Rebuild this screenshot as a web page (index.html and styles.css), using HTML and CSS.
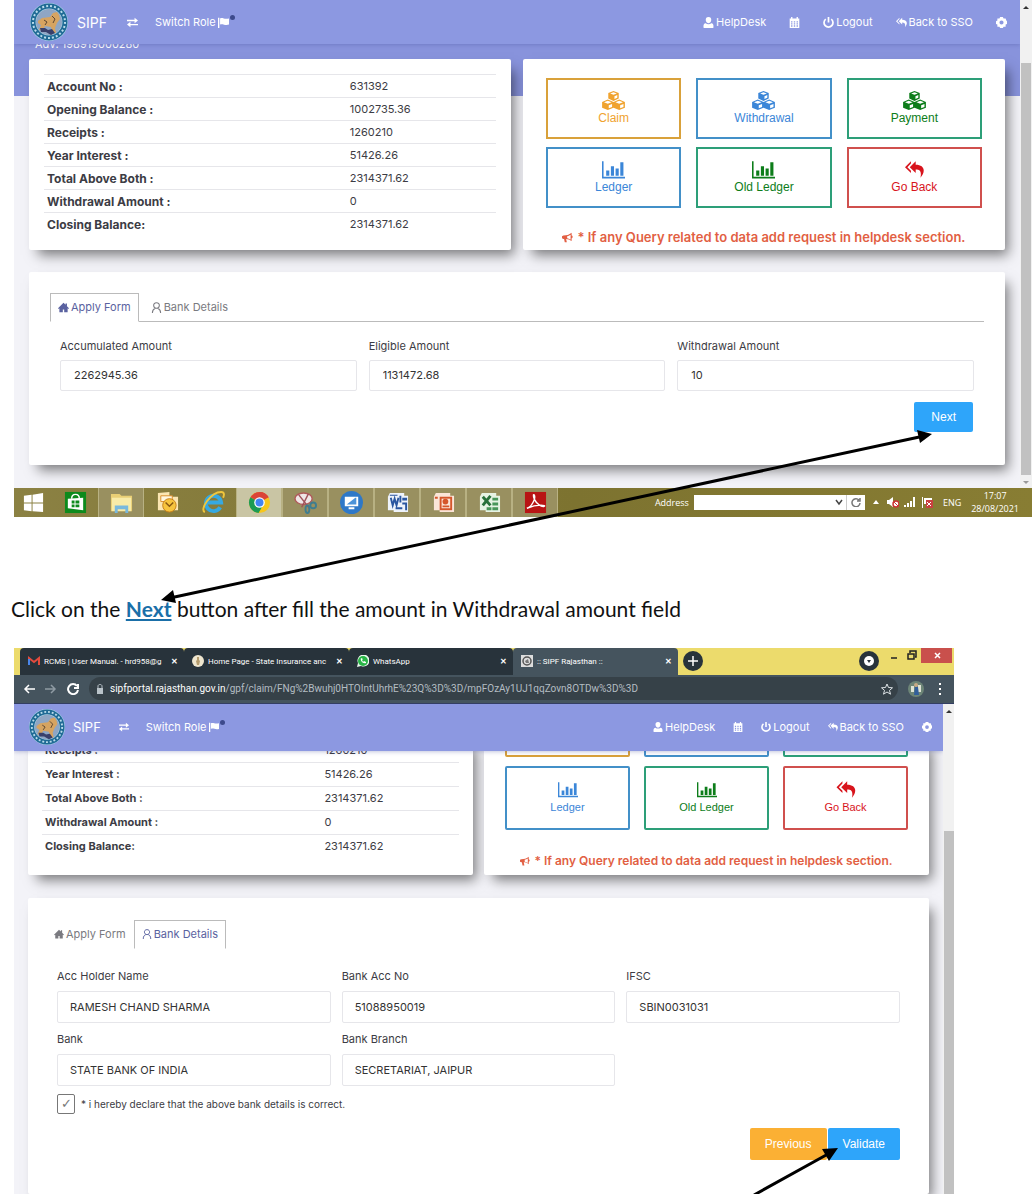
FILE: index.html
```html
<!DOCTYPE html>
<html lang="en">
<head>
  <meta charset="UTF-8" />
  <meta name="viewport" content="width=device-width, initial-scale=1" />
  <title>SIPF Rajasthan - User Manual</title>
  <link rel="stylesheet" href="styles.css">
</head>
<body>

  <!-- Icons -->
  <svg class="sprite" aria-hidden="true">
    <symbol id="logo" viewBox="0 0 38 38">
      <circle cx="19" cy="19" r="19" fill="#a9d3e6"/>
      <circle cx="19" cy="19" r="16" fill="none" stroke="#1f6a95" stroke-width="5"/>
      <circle cx="19" cy="19" r="16" fill="none" stroke="#b9dcea" stroke-width="2" stroke-dasharray="2 2"/>
      <circle cx="19" cy="19" r="13" fill="#8fa6c4"/>
      <path d="M8 18l4-3 8-1 3-4 4-1 2 3 1 4-3 4-2 5 1 5h-3l-2-6-6-1-2 4H9l2-5-3-2z" fill="#d6a461"/>
      <path d="M10 25h5l3 2 4-1 3 4-4 2-5-3-5 0z" fill="#39406b"/>
      <path d="M14 17l3 2-2 3M22 13l3 3-2 4" fill="none" stroke="#5b4632"/>
    </symbol>
    <symbol id="exchange" viewBox="0 0 16 16">
      <path d="M0 4h11V1l5 4-5 4V6H0zM16 10H5V7l-5 4 5 4v-3h11z"/>
    </symbol>
    <symbol id="flag" viewBox="0 0 16 16">
      <path d="M0 1h2v15H0zM3 2c4-2 6 2 13 0v9c-6 2-9-2-13 0z"/>
    </symbol>
    <symbol id="user" viewBox="0 0 16 16">
      <path d="M8 0c3 0 4 2 4 4s-1 5-4 5-4-3-4-5 1-4 4-4zM1 16c-1-5 1-7 3-7 2 2 6 2 8 0 2 0 4 2 3 7z"/>
    </symbol>
    <symbol id="user-o" viewBox="0 0 16 16">
      <path d="M8 1c6 0 5 8 0 8s-6-8 0-8zM2 16c0-5 2-6 4-7M14 16c0-5-2-6-4-7" fill="none" stroke="currentColor" stroke-width="1.5"/>
    </symbol>
    <symbol id="calendar" viewBox="0 0 16 16">
      <path fill-rule="evenodd" d="M1 2h2V0h2v2h6V0h2v2h2v14H1zM3 6v2h2V6zM7 6v2h2V6zM11 6v2h2V6zM3 9v2h2V9zM7 9v2h2V9zM11 9v2h2V9zM3 12v2h2v-2zM7 12v2h2v-2zM11 12v2h2v-2z"/>
    </symbol>
    <symbol id="power" viewBox="0 0 16 16">
      <path d="M4 3a6.500 6.500 0 1 0 8 0M8 0v8" fill="none" stroke="currentColor" stroke-width="2.500"/>
    </symbol>
    <symbol id="reply-all" viewBox="0 0 16 16">
      <path d="M5 1L0 6l5 5V9L2 6l3-3zM9 1L4 6l5 5V8c4 0 5 2 4 7 5-6 3-11-4-11z"/>
    </symbol>
    <symbol id="gear" viewBox="0 0 16 16">
      <path fill-rule="evenodd" d="M6 0h4l1 2 3 0 1 3 1 1v4l-2 1 0 3-3 0-1 2H6l-1-2-3 0 0-3-2-1V6l2-1 0-3 3 0zM8 5a3 3 0 1 0 0 6 3 3 0 0 0 0-6z"/>
    </symbol>
    <symbol id="cubes" viewBox="0 0 24 20">
      <path d="M12 0l5.500 2v6L12 10.500 6.500 8V2zM6 9l6 2.500v6L6 20 0 17.500v-6zM18 9l6 2.500v6L18 20l-6-2.500v-6z"/>
      <path d="M8.500 2.600L12 4l3.500-1.400L12 1.300zM13 5.500v3l3-1.400v-3zM2 11.800l4 1.700 4-1.700-4-1.600zM7 15v3.200l3.500-1.400v-3.200zM14 11.800l4 1.700 4-1.700-4-1.600zM19 15v3.200l3.500-1.400v-3.200z" fill="#fff"/>
    </symbol>
    <symbol id="chart" viewBox="0 0 22 18">
      <path d="M0 1h1.500v15H22v1.500H0zM4 10h3v5H4zM8.500 6h3v9h-3zM13 8h3v7h-3zM17.500 2h3v13h-3z"/>
    </symbol>
    <symbol id="bullhorn" viewBox="0 0 16 16">
      <path d="M14 1C10 4 7 5 2 5L0 6v3l2 1h1l1 5h3l-1-5c3 0 5 1 8 3V9c2 0 2-4 0-4zM12.500 4v7c-2-1-3-1.500-5-2V6c2-.3 3-.8 5-2z" fill-rule="evenodd"/>
    </symbol>
    <symbol id="home" viewBox="0 0 16 16">
      <path d="M8 1l3 3V2h2v4l3 3-1 1-1-1v6H9v-4H7v4H2V9l-1 1-1-1z"/>
    </symbol>
  </svg>

  <!-- Step 1: apply form -->
  <section class="screen">
    <div class="viewport">
      <div class="page">
        <nav class="navbar">
          <svg class="logo"><use href="#logo"/></svg>
          <a href="#" class="brand">SIPF</a>
          <a href="#" class="switch"><svg class="icon"><use href="#exchange"/></svg><span>Switch Role</span><svg class="icon"><use href="#flag"/></svg><i class="dot"></i></a>
          <div class="nav-right">
            <a href="#"><svg class="icon"><use href="#user"/></svg>HelpDesk</a>
            <a href="#" aria-label="Calendar"><svg class="icon"><use href="#calendar"/></svg></a>
            <a href="#"><svg class="icon"><use href="#power"/></svg>Logout</a>
            <a href="#"><svg class="icon"><use href="#reply-all"/></svg>Back to SSO</a>
            <a href="#" aria-label="Settings"><svg class="icon"><use href="#gear"/></svg></a>
          </div>
        </nav>
        <div class="employee">Adv: 198919000280</div>

        <div class="content">
          <div class="cards">
            <div class="card account">
              <table>
                <tr><th>Account No :</th><td>631392</td></tr>
                <tr><th>Opening Balance :</th><td>1002735.36</td></tr>
                <tr><th>Receipts :</th><td>1260210</td></tr>
                <tr><th>Year Interest :</th><td>51426.26</td></tr>
                <tr><th>Total Above Both :</th><td>2314371.62</td></tr>
                <tr><th>Withdrawal Amount :</th><td>0</td></tr>
                <tr><th>Closing Balance:</th><td>2314371.62</td></tr>
              </table>
            </div>
            <div class="card actions">
              <div class="tiles">
                <a href="#" class="tile orange"><svg><use href="#cubes"/></svg>Claim</a>
                <a href="#" class="tile blue"><svg><use href="#cubes"/></svg>Withdrawal</a>
                <a href="#" class="tile green"><svg><use href="#cubes"/></svg>Payment</a>
                <a href="#" class="tile blue"><svg><use href="#chart"/></svg>Ledger</a>
                <a href="#" class="tile green"><svg><use href="#chart"/></svg>Old Ledger</a>
                <a href="#" class="tile red"><svg><use href="#reply-all"/></svg>Go Back</a>
              </div>
              <p class="notice"><svg class="icon"><use href="#bullhorn"/></svg> * If any Query related to data add request in helpdesk section.</p>
            </div>
          </div>

          <form class="card form">
            <div class="tabs">
              <a href="#" class="tab active"><svg class="icon"><use href="#home"/></svg>Apply Form</a>
              <a href="#" class="tab"><svg class="icon"><use href="#user-o"/></svg>Bank Details</a>
            </div>
            <div class="fields">
              <div class="field">
                <label for="accumulated">Accumulated Amount</label>
                <input type="text" id="accumulated" value="2262945.36" />
              </div>
              <div class="field">
                <label for="eligible">Eligible Amount</label>
                <input type="text" id="eligible" value="1131472.68" />
              </div>
              <div class="field">
                <label for="withdrawal">Withdrawal Amount</label>
                <input type="text" id="withdrawal" value="10" />
              </div>
            </div>
            <div class="buttons">
              <button type="button" class="btn btn-blue">Next</button>
            </div>
          </form>
        </div>
      </div>
      <div class="scrollbar">
        <i class="up"></i>
        <i class="thumb"></i>
        <i class="down"></i>
      </div>
    </div>

    <div class="taskbar">
      <button class="task start" aria-label="Start"><svg viewBox="0 0 24 24"><path d="M2 5l8-1v8H2zM11 4l11-2v10H11zM2 13h8v8l-8-1zM11 13h11v9l-11-1z" fill="#fff"/></svg></button>
      <button class="task" aria-label="Store"><svg viewBox="0 0 24 24"><path d="M1 1h22v22H1z" fill="#0d8a1c"/><path d="M4 8l16-1v13L4 18z" fill="#fff"/><path d="M8 8c0-6 8-6 8 0" fill="none" stroke="#fff" stroke-width="1.500"/><path d="M8 10h3v3H8zM12 10h4v3h-4zM8 14h3v3H8zM12 14h4v3h-4z" fill="#0d8a1c"/></svg></button>
      <button class="task open" aria-label="Explorer"><svg viewBox="0 0 24 24"><path d="M1 3h9l2 2h11v16H1z" fill="#e9cf75"/><path d="M2 7h20v14H2z" fill="#f8eba8"/><path d="M5 15h14v8h-3v-4H8v4H5z" fill="#79b9dd"/></svg></button>
      <button class="task" aria-label="Outlook"><svg viewBox="0 0 24 24"><path d="M2 2l12-1v5h9v14H2z" fill="#fbe6b2"/><path d="M5 5h12v6H5z" fill="#fff7df" stroke="#d98e2c"/><circle cx="14" cy="15" r="7" fill="#f7c43e" stroke="#c67f19"/><path d="M10 12l4 4 4-4" fill="none" stroke="#875813" stroke-width="1.500"/></svg></button>
      <button class="task" aria-label="Internet Explorer"><svg viewBox="0 0 24 24"><path d="M19 17a8 8 0 1 1 1-5H6" fill="none" stroke="#36a9e1" stroke-width="4"/><path d="M3 22C-3 20 9 1 20 1c4 0 3 4 2 6" fill="none" stroke="#f0c63b" stroke-width="2"/></svg></button>
      <button class="task open light" aria-label="Chrome"><svg viewBox="0 0 24 24"><circle cx="12" cy="12" r="11" fill="#f7c71c"/><path d="M12 12L2.500 6.500A11 11 0 0 1 21.500 6.500z" fill="#db4437"/><path d="M12 1a11 11 0 0 1 9.500 5.500H12z" fill="#db4437"/><path d="M12 12L2.500 6.500A11 11 0 0 0 11 23l4-7z" fill="#1c9b54"/><circle cx="12" cy="12" r="5.500" fill="#fff"/><circle cx="12" cy="12" r="4.200" fill="#4285f4"/></svg></button>
      <button class="task open" aria-label="Snipping Tool"><svg viewBox="0 0 24 24"><ellipse cx="10" cy="8" rx="9" ry="6" fill="#efe6e6" stroke="#b05a5a" stroke-width="1.500"/><path d="M5 4l11 14M15 3L8 17" stroke="#a0525a" stroke-width="1.500"/><ellipse cx="14" cy="19" rx="2" ry="4" fill="none" stroke="#3f7d8f" stroke-width="2"/><ellipse cx="20" cy="15" rx="3" ry="3" fill="none" stroke="#3f7d8f" stroke-width="2"/></svg></button>
      <button class="task open" aria-label="Remote Desktop"><svg viewBox="0 0 24 24"><circle cx="12" cy="12" r="12" fill="#2e78c8"/><path d="M5 6h14v10H5zM9 17h6v2H9z" fill="#fff"/><path d="M7 14l9-7h1v7z" fill="#4c93d9"/></svg></button>
      <button class="task open" aria-label="Word"><svg viewBox="0 0 24 24"><path d="M4 2h15v3h4v17H8v-2H2V6z" fill="#eef3fb"/><path d="M5 7l2 8 2-7 2 7 2-8" fill="none" stroke="#2a56a0" stroke-width="2"/><path d="M14 5h2v7h-2zM17 7h5v3h-5zM17 12h5v8h-2v-6h-3zM10 17h7v2h-7zM4 4h8v1H4z" fill="#2a56a0"/></svg></button>
      <button class="task open" aria-label="PowerPoint"><svg viewBox="0 0 24 24"><path d="M4 2h15v3h4v17H8v-2H2V6z" fill="#fbe5d8"/><path d="M8 6h13v14H8z" fill="#d5562b"/><path d="M10 8h9v10h-9z" fill="#fbe5d8"/><circle cx="14" cy="11" r="3" fill="#d5562b"/><path d="M11 15h7v2h-7zM3 6h3v2H3z" fill="#d5562b"/></svg></button>
      <button class="task open" aria-label="Excel"><svg viewBox="0 0 24 24"><path d="M4 2h15v3h4v17H8v-2H2V6z" fill="#e6f3e4"/><path d="M5 6l8 9M13 5L5 15" stroke="#27703a" stroke-width="3"/><path d="M15 7h6v3h-6zM15 12h6v3h-6zM15 17h6v3h-6zM9 17h5v3H9z" fill="#48965a"/></svg></button>
      <button class="task open" aria-label="Acrobat"><svg viewBox="0 0 24 24"><path d="M1 1h22v22H1z" fill="#b81414"/><path d="M3 18c5-1 9-10 8-13s-2 0 0 4 7 8 10 7-6-3-18 2" fill="none" stroke="#fff" stroke-width="1.500"/></svg></button>

      <div class="tray">
        <label for="address">Address</label>
        <div class="address">
          <input type="text" id="address" />
          <svg viewBox="0 0 10 10"><path d="M2 3l3 4 3-4" fill="none" stroke="#444" stroke-width="1.500"/></svg>
          <button class="refresh" aria-label="Refresh"><svg viewBox="0 0 10 10"><path d="M8 3a4 4 0 1 0 1 3M9 1v3H6" fill="none" stroke="#777" stroke-width="1.500"/></svg></button>
        </div>
        <svg class="tray-icon" viewBox="0 0 12 12"><path d="M3 8l3-4 3 4z" fill="#fff"/></svg>
        <svg class="tray-icon" viewBox="0 0 12 12"><path d="M0 4h2l4-3v10L2 8H0z" fill="#fff"/><circle cx="9" cy="8" r="3" fill="#fff" stroke="#c33" stroke-width="1.500"/><path d="M7 6l4 4" stroke="#c33"/></svg>
        <svg class="tray-icon" viewBox="0 0 12 12"><path d="M0 9h2v2H0zM3 7h2v4H3zM6 5h2v6H6zM9 1h2v10H9z" fill="#fff"/></svg>
        <svg class="tray-icon" viewBox="0 0 12 12"><path d="M1 1h1v11H1zM3 2h8v6H3z" fill="#fff"/><path d="M5 4h7v8H5z" fill="#c94040"/><path d="M6 6l4 4M10 6l-4 4" stroke="#fff"/></svg>
        <span class="lang">ENG</span>
        <div class="clock">17:07<br>28/08/2021</div>
      </div>
    </div>
  </section>

  <p class="caption">Click on the <a href="#withdrawal">Next</a> button after fill the amount in Withdrawal amount field</p>

  <!-- Step 2: bank details -->
  <section class="screen small">
    <div class="tabstrip">
      <div class="browser-tab first">
        <svg viewBox="0 0 12 12"><path d="M1 10V3l5 4 5-4v7" fill="none" stroke="#e34b3d" stroke-width="2"/><path d="M1 4v6" stroke="#4a86e8" stroke-width="2"/></svg>
        <span>RCMS | User Manual. - hrd958@g</span><b>✕</b>
      </div>
      <div class="browser-tab second">
        <svg viewBox="0 0 12 12"><circle cx="6" cy="6" r="6" fill="#efe6cf"/><path d="M5 2h2v3l1 1-1 4H5L4 6l1-1z" fill="#b59c6e"/></svg>
        <span>Home Page - State Insurance anc</span><b>✕</b>
      </div>
      <div class="browser-tab third">
        <svg viewBox="0 0 12 12"><path d="M0 12l1-4a6 6 0 1 1 3 3z" fill="#e9f7ec"/><circle cx="6" cy="6" r="5" fill="#28b446"/><path d="M4 3c-1 3 2 6 5 5V7L7 6 6 7 5 5l1-1z" fill="#fff"/></svg>
        <span>WhatsApp</span><b>✕</b>
      </div>
      <div class="browser-tab current">
        <svg viewBox="0 0 12 12"><path d="M0 0h12v12H0z" fill="#ddd"/><circle cx="6" cy="6" r="4" fill="none" stroke="#555" stroke-width="1.500"/><path d="M4 6l3-2 1 4-3 0z" fill="#777"/></svg>
        <span>:: SIPF Rajasthan ::</span><b>✕</b>
      </div>
      <button class="round" aria-label="New tab"><svg viewBox="0 0 20 20"><path d="M10 5v10M5 10h10" stroke="#fff" stroke-width="1.500"/></svg></button>
      <div class="window-buttons">
        <button class="round" aria-label="Search tabs"><svg viewBox="0 0 20 20"><circle cx="10" cy="10" r="5" fill="#fff"/><path d="M8 9h4l-2 3z" fill="#28333b"/></svg></button>
        <button class="win" aria-label="Minimise"><svg viewBox="0 0 12 12"><path d="M3 9h6" stroke="#222" stroke-width="1.500"/></svg></button>
        <button class="win" aria-label="Restore"><svg viewBox="0 0 12 12"><path d="M2 5h6v5H2zM4 4V2h6v6H9" fill="none" stroke="#222" stroke-width="1.500"/></svg></button>
        <button class="win close" aria-label="Close"><svg viewBox="0 0 12 12"><path d="M4 4l5 5M9 4l-5 5" stroke="#fff" stroke-width="1.500"/></svg></button>
      </div>
    </div>
    <div class="toolbar">
      <svg viewBox="0 0 12 12"><path d="M12 6H2M6 2L2 6l4 4" fill="none" stroke="#fff" stroke-width="1.500"/></svg>
      <svg viewBox="0 0 12 12"><path d="M0 6h10M6 2l4 4-4 4" fill="none" stroke="#8f9ba3" stroke-width="1.500"/></svg>
      <svg viewBox="0 0 12 12"><path d="M10 3a5 5 0 1 0 1 4M11 1v4H7" fill="none" stroke="#fff" stroke-width="2"/></svg>
      <div class="url">
        <svg viewBox="0 0 12 12"><path d="M3 5h6v6H3z" fill="#b9c2c8"/><path d="M4 5V3c0-2 4-2 4 0v2" fill="none" stroke="#b9c2c8"/></svg>
        <span><b>sipfportal.rajasthan.gov.in</b>/gpf/claim/FNg%2Bwuhj0HTOIntUhrhE%23Q%3D%3D/mpFOzAy1UJ1qqZovn8OTDw%3D%3D</span>
        <svg viewBox="0 0 12 12"><path d="M6 1l1.500 3.500 4 .3-3 2.600 1 3.800L6 9l-3.500 2.200 1-3.800-3-2.600 4-.3z" fill="none" stroke="#dfe4e7"/></svg>
      </div>
      <svg class="avatar" viewBox="0 0 16 16"><circle cx="8" cy="8" r="8" fill="#6d8577"/><path d="M3 5h3v6H3zM10 4h3v7h-3z" fill="#dfe3d4"/><path d="M7 6h3l1 8H6z" fill="#325f9b"/><circle cx="8" cy="4" r="2" fill="#c8aa86"/></svg>
      <svg viewBox="0 0 12 12"><path d="M5 0h2v2H5zM5 5h2v2H5zM5 10h2v2H5z" fill="#fff"/></svg>
    </div>
    <div class="viewport">
      <div class="page">
        <nav class="navbar">
          <svg class="logo"><use href="#logo"/></svg>
          <a href="#" class="brand">SIPF</a>
          <a href="#" class="switch"><svg class="icon"><use href="#exchange"/></svg><span>Switch Role</span><svg class="icon"><use href="#flag"/></svg><i class="dot"></i></a>
          <div class="nav-right">
            <a href="#"><svg class="icon"><use href="#user"/></svg>HelpDesk</a>
            <a href="#" aria-label="Calendar"><svg class="icon"><use href="#calendar"/></svg></a>
            <a href="#"><svg class="icon"><use href="#power"/></svg>Logout</a>
            <a href="#"><svg class="icon"><use href="#reply-all"/></svg>Back to SSO</a>
            <a href="#" aria-label="Settings"><svg class="icon"><use href="#gear"/></svg></a>
          </div>
        </nav>

        <div class="content">
          <div class="cards">
            <div class="card account">
              <table>
                <tr><th>Receipts :</th><td>1260210</td></tr>
                <tr><th>Year Interest :</th><td>51426.26</td></tr>
                <tr><th>Total Above Both :</th><td>2314371.62</td></tr>
                <tr><th>Withdrawal Amount :</th><td>0</td></tr>
                <tr><th>Closing Balance:</th><td>2314371.62</td></tr>
              </table>
            </div>
            <div class="card actions">
              <div class="tiles">
                <div class="tile orange"></div>
                <div class="tile blue"></div>
                <div class="tile green"></div>
                <a href="#" class="tile blue"><svg><use href="#chart"/></svg>Ledger</a>
                <a href="#" class="tile green"><svg><use href="#chart"/></svg>Old Ledger</a>
                <a href="#" class="tile red"><svg><use href="#reply-all"/></svg>Go Back</a>
              </div>
              <p class="notice"><svg class="icon"><use href="#bullhorn"/></svg> * If any Query related to data add request in helpdesk section.</p>
            </div>
          </div>

          <form class="card form">
            <div class="tabs">
              <a href="#" class="tab"><svg class="icon"><use href="#home"/></svg>Apply Form</a>
              <a href="#" class="tab active"><svg class="icon"><use href="#user-o"/></svg>Bank Details</a>
            </div>
            <div class="fields">
              <div class="field">
                <label for="holder">Acc Holder Name</label>
                <input type="text" id="holder" value="RAMESH CHAND SHARMA" />
              </div>
              <div class="field">
                <label for="accno">Bank Acc No</label>
                <input type="text" id="accno" value="51088950019" />
              </div>
              <div class="field">
                <label for="ifsc">IFSC</label>
                <input type="text" id="ifsc" value="SBIN0031031" />
              </div>
              <div class="field">
                <label for="bank">Bank</label>
                <input type="text" id="bank" value="STATE BANK OF INDIA" />
              </div>
              <div class="field">
                <label for="branch">Bank Branch</label>
                <input type="text" id="branch" value="SECRETARIAT, JAIPUR" />
              </div>
            </div>
            <div class="declare">
              <input type="checkbox" id="declare" checked />
              <label for="declare">* i hereby declare that the above bank details is correct.</label>
            </div>
            <div class="buttons">
              <button type="button" class="btn btn-orange">Previous</button>
              <button type="button" class="btn btn-blue">Validate</button>
            </div>
          </form>
        </div>
      </div>
      <div class="scrollbar">
        <i class="up"></i>
        <i class="thumb"></i>
      </div>
    </div>
  </section>

  <!-- Arrows from the instructions to the buttons -->
  <svg class="arrows" viewBox="0 0 1036 1194">
    <path d="M170 598L924 436M754 1195L828 1154" stroke="#000" stroke-width="3" fill="none"/>
    <path d="M932 434L920 443L917 430zM161 600L173 590L176 603zM838 1148L829 1161L822 1149z"/>
  </svg>

</body>
</html>
```

FILE: styles.css
```css
* {
  box-sizing: border-box;
}
body {
  margin: 0;
  min-height: 100vh;
  display: flex;
  flex-direction: column;
  position: relative;
  background: #fff;
  font-family: Inter, "Open Sans", sans-serif;
  font-size: 11px;
  color: #3c3c44;
}
a {
  color: inherit;
  text-decoration: none;
}
button {
  border: none;
  padding: 0;
  background: none;
  cursor: pointer;
}
svg {
  display: block;
  flex: none;
  fill: currentColor;
}
.sprite {
  position: absolute;
  width: 0;
  height: 0;
}
.icon {
  width: 11px;
  height: 11px;
}
.small .icon {
  width: 10px;
  height: 10px;
}
.arrows {
  position: absolute;
  top: 0;
  left: 0;
  width: 100%;
  pointer-events: none;
  fill: #000;
}

/* screens */
.screen {
  margin: 0 4px 0 14px;
}
.small {
  flex: 1;
  display: flex;
  flex-direction: column;
  margin-right: 82px;
}
.viewport {
  display: flex;
}
.small .viewport {
  flex: 1;
}
.page {
  flex: 1;
  min-width: 0;
  overflow: hidden;
  background: linear-gradient(#8893dc 96px, #f3f3f8 96px);
}
.small .page {
  display: flex;
  flex-direction: column;
  background: #f3f3f8;
}
.scrollbar {
  width: 12px;
  display: flex;
  flex-direction: column;
  align-items: center;
  padding: 6px 0 4px;
  background: #f1f1f1;
}
.small .scrollbar {
  width: 11px;
  padding-bottom: 0;
}
.thumb {
  flex: 1;
  width: 10px;
  margin: 54px 0 6px;
  background: #c1c1c1;
}
.small .thumb {
  margin: 118px 0 0;
}
.up,
.down {
  border: 3px solid transparent;
  border-top: 0;
  border-bottom: 3px solid #333;
}
.down {
  border-top: 3px solid #999;
  border-bottom: 0;
}

/* navbar */
.navbar {
  position: relative;
  z-index: 1;
  display: flex;
  align-items: center;
  height: 44px;
  padding: 0 13px 0 16px;
  background: #8c98e1;
  color: #fff;
  box-shadow: 0 1px 4px rgba(60, 70, 150, 0.3);
}
.small .navbar {
  height: 47px;
  padding: 0 11px 0 15px;
  flex: none;
}
.logo {
  width: 38px;
  height: 38px;
}
.small .logo {
  width: 36px;
  height: 36px;
}
.brand {
  margin: 0 20px 0 9px;
  font-size: 14px;
}
.small .brand {
  margin: 0 18px 0 8px;
  font-size: 13px;
}
.switch {
  display: flex;
  align-items: center;
}
.switch span {
  margin: 0 2px 0 17px;
}
.dot {
  width: 5px;
  height: 5px;
  margin: 0 0 10px 1px;
  border-radius: 50%;
  background: #3d4a8c;
}
.nav-right {
  display: flex;
  gap: 23px;
  margin-left: auto;
}
.small .nav-right {
  gap: 18px;
}
.nav-right a {
  display: flex;
  align-items: center;
  gap: 2px;
}
.employee {
  height: 23px;
  margin: -8px 0 0 21px;
  line-height: 16px;
  color: #fff;
}

/* cards */
.content {
  padding: 0 15px 23px;
}
.small .content {
  flex: 1;
  display: flex;
  flex-direction: column;
  margin-top: -13px;
  padding: 0 14px;
}
.cards {
  display: grid;
  grid-template-columns: 1fr 1fr;
  gap: 12px;
  margin-bottom: 22px;
}
.small .cards {
  gap: 11px;
  margin-bottom: 23px;
}
.card {
  background: #fff;
  border-radius: 2px;
  box-shadow: 6px 8px 12px -3px rgba(0, 0, 0, 0.5);
}
.account {
  padding: 15px 15px 14px;
}
.small .account {
  padding: 0 14px 16px;
}
table {
  width: 100%;
  table-layout: fixed;
  border-collapse: collapse;
}
tr {
  height: 23px;
}
.small tr {
  height: 24px;
}
th,
td {
  padding: 0 3px;
  border-top: 1px solid #e6e6ea;
  text-align: left;
  font-weight: 400;
}
th {
  width: 67%;
  font-size: 12px;
  font-weight: 700;
}
.small th {
  font-size: 11px;
}
.actions {
  padding: 19px 23px 4px;
}
.small .actions {
  padding: 0 21px 6px;
}
.tiles {
  display: grid;
  grid-template-columns: 1fr 1fr 1fr;
  grid-auto-rows: 61px;
  gap: 8px 15px;
}
.small .tiles {
  grid-template-rows: 19px;
  grid-auto-rows: 64px;
  gap: 9px 14px;
}
.tile {
  display: flex;
  flex-direction: column;
  align-items: center;
  justify-content: center;
  border: 2px solid;
  font-family: "Liberation Sans", Arial, sans-serif;
  font-size: 12px;
  line-height: 16px;
}
.small .tile {
  border-radius: 2px;
  font-size: 11px;
}
.tile svg {
  width: 23px;
  height: 19px;
}
.small .tile svg {
  width: 20px;
}
.orange {
  color: #f0a32f;
  border-color: #d9a13a;
}
.blue {
  color: #3b86d8;
  border-color: #4390c8;
}
.green {
  color: #0d7d1a;
  border-color: #2d9f78;
}
.red {
  color: #d8141c;
  border-color: #d0504e;
}
.notice {
  display: flex;
  align-items: center;
  justify-content: center;
  gap: 4px;
  margin: 21px 0 0;
  line-height: 16px;
  font-size: 13px;
  font-weight: 600;
  color: #e25f43;
  white-space: nowrap;
}
.small .notice {
  margin-top: 23px;
  font-size: 12px;
}

/* form */
.form {
  padding: 21px 21px 33px;
}
.small .form {
  flex: 1;
  padding: 22px 18px 33px;
}
.tabs {
  display: flex;
  gap: 4px;
  height: 29px;
  border-bottom: 1px solid #bbb;
}
.small .tabs {
  gap: 0;
  border-bottom: none;
}
.tab {
  display: flex;
  align-items: center;
  gap: 2px;
  height: 29px;
  padding: 0 7px;
  border: 1px solid transparent;
  color: #7a7a80;
}
.tab.active {
  border-color: #bbb;
  border-bottom-color: #fff;
  background: #fff;
  color: #5a62a0;
}
.fields {
  display: grid;
  grid-template-columns: 1fr 1fr 1fr;
  gap: 8px 12px;
  padding: 16px 10px 0;
}
.small .fields {
  gap: 8px 11px;
  padding: 19px 11px 0;
}
.field label {
  display: block;
  margin-bottom: 6px;
  line-height: 16px;
}
.small .field label {
  margin-bottom: 7px;
}
.field input {
  display: block;
  width: 100%;
  height: 31px;
  padding: 0 13px;
  border: 1px solid #e6e6ea;
  border-radius: 2px;
  background: #fff;
  font: inherit;
  color: #333;
}
.small .field input {
  height: 32px;
  padding: 0 12px;
}
.declare {
  display: flex;
  align-items: center;
  gap: 6px;
  padding: 8px 11px 0;
  font-size: 10px;
}
.declare input {
  appearance: none;
  width: 18px;
  height: 20px;
  margin: 0;
  border: 1px solid #777;
  border-radius: 2px;
  text-align: center;
  line-height: 18px;
}
.declare input:checked::before {
  content: "✓";
  color: #777;
}
.buttons {
  display: flex;
  justify-content: flex-end;
  gap: 1px;
  padding: 11px 11px 0;
}
.small .buttons {
  padding-top: 14px;
}
.btn {
  height: 30px;
  padding: 0 17px;
  border-radius: 2px;
  color: #fff;
  font-family: "Liberation Sans", Arial, sans-serif;
  font-size: 12px;
}
.small .btn {
  height: 32px;
  padding: 0 15px;
}
.btn-blue {
  background: #2ea5fa;
}
.btn-orange {
  background: #fbb034;
}

/* taskbar */
.taskbar {
  display: flex;
  height: 29px;
  background: linear-gradient(90deg, #8b8143, #7d7330 55%, #887d33);
  color: #fff;
  font-family: "Open Sans", sans-serif;
  font-size: 9px;
}
.task {
  width: 46px;
  display: flex;
  align-items: center;
  justify-content: center;
}
.task svg {
  width: 23px;
  height: 23px;
}
.start {
  width: 38px;
}
.open {
  border: 1px solid #b8b183;
  border-width: 0 1px;
  background: #999060;
}
.light {
  background: #c9c5a4;
}
.tray {
  display: flex;
  align-items: center;
  gap: 5px;
  margin-left: auto;
  padding-right: 13px;
}
.address {
  display: flex;
  align-items: center;
  height: 15px;
  background: #fff;
}
.address input {
  width: 140px;
  height: 15px;
  border: none;
  background: none;
}
.address svg {
  width: 10px;
  height: 10px;
}
.refresh {
  height: 15px;
  margin-left: 2px;
  padding: 0 4px;
  border-left: 1px solid #ccc;
}
.tray-icon {
  width: 12px;
  height: 12px;
}
.lang {
  margin: 0 5px;
}
.clock {
  line-height: 13px;
  text-align: center;
}

.caption {
  margin: 78px 0 25px 11px;
  font-family: Lato, Calibri, sans-serif;
  font-size: 21px;
  line-height: 28px;
  color: #111;
}
.caption a {
  color: #1a6fa8;
  font-weight: 700;
  text-decoration: underline;
}

/* browser window */
.tabstrip {
  display: flex;
  align-items: center;
  height: 27px;
  padding-left: 6px;
  background: #ecdb6c;
  color: #fff;
  font-family: Roboto, sans-serif;
  font-size: 8px;
}
.browser-tab {
  flex: none;
  display: flex;
  align-items: center;
  gap: 4px;
  height: 27px;
  padding: 0 6px 0 8px;
  border-radius: 4px 4px 0 0;
  background: #28333b;
}
.browser-tab svg {
  width: 12px;
  height: 12px;
}
.browser-tab span {
  flex: 1;
  white-space: nowrap;
}
.first {
  width: 164px;
}
.second {
  width: 165px;
}
.third {
  width: 164px;
}
.current {
  width: 165px;
  background: #45545e;
}
.round {
  width: 20px;
  height: 20px;
  margin-left: 5px;
  border-radius: 50%;
  background: #28333b;
}
.window-buttons {
  display: flex;
  align-items: center;
  align-self: stretch;
  margin: 0 2px 0 auto;
}
.win {
  align-self: flex-start;
  width: 18px;
  height: 15px;
}
.win svg {
  width: 12px;
  height: 12px;
  margin: 0 auto;
}
.round + .win {
  margin-left: 6px;
}
.close {
  width: 31px;
  background: #c9504c;
}
.toolbar {
  display: flex;
  align-items: center;
  gap: 10px;
  height: 29px;
  padding: 0 8px 0 9px;
  background: #45545e;
  border-bottom: 1px solid #333e63;
}
.toolbar svg {
  width: 12px;
  height: 12px;
}
.toolbar .avatar {
  width: 16px;
  height: 16px;
}
.url {
  flex: 1;
  display: flex;
  align-items: center;
  gap: 4px;
  height: 23px;
  padding: 0 5px;
  border-radius: 12px;
  background: #364148;
  color: #b4bdc3;
  font-family: Roboto, sans-serif;
  font-size: 10px;
}
.url span {
  flex: 1;
}
.url b {
  font-weight: 400;
  color: #fff;
}
```
